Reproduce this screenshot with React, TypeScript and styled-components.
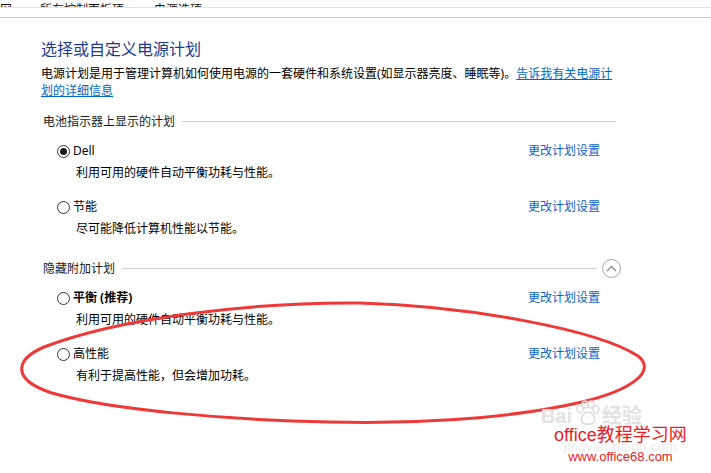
import React from 'react';
import styled, { createGlobalStyle } from 'styled-components';

const GlobalStyle = createGlobalStyle`
    html, body {
        margin: 0;
        padding: 0;
        background: #ffffff;
    }
    body {
        font-family: "Noto Sans", "Noto Sans CJK SC", sans-serif;
        font-size: 12px;
        color: #000;
    }
`;

const Page = styled.div`
    position: relative;
    width: 711px;
    height: 473px;
    overflow: hidden;
    background: #fff;
`;

/* bande du haut (fil d'Ariane coupé) */
const Crumbs = styled.div`
    height: 7px;
    overflow: hidden;
    border-bottom: 1px solid #e3e3e3;
    display: flex;
    align-items: flex-end;
`;

const Crumb = styled.span<{ $left: number }>`
    margin-left: ${(p) => p.$left}px;
    line-height: 17px;
    margin-bottom: -11px;
    white-space: nowrap;
    color: #111;
`;

const ToolStrip = styled.div`
    height: 9px;
    border-bottom: 1px solid #cbcbcb;
`;

const Main = styled.div`
    padding: 20px 0 0 41px;
    width: 575px;
`;

const Title = styled.h1`
    margin: 0;
    font-size: 16px;
    line-height: 22px;
    font-weight: normal;
    color: #1e3a8f;
`;

const Intro = styled.p`
    margin: 5px 0 0;
    line-height: 17px;
    white-space: nowrap;
`;

const Link = styled.a`
    color: #0066cc;
    text-decoration: underline;
    cursor: pointer;
`;

const SectionHead = styled.div<{ $top: number }>`
    display: flex;
    align-items: center;
    gap: 7px;
    margin: ${(p) => p.$top}px 0 0 2px;
    height: 18px;
    color: #1a1a1a;
`;

const Rule = styled.div`
    flex: 1;
    height: 1px;
    background: #cfcfcf;
`;

const Collapse = styled.button`
    width: 19px;
    height: 19px;
    margin: 0 -5px 0 -2px;
    padding: 0;
    border: 1px solid #a6a6a6;
    border-radius: 50%;
    background: #fff;
    display: flex;
    align-items: center;
    justify-content: center;
`;

const PlanList = styled.div`
    display: flex;
    flex-direction: column;
    gap: 17px;
    margin: 12px 0 0 16px;
    width: 543px;
`;

const Plan = styled.div``;

const PlanRow = styled.div`
    display: flex;
    align-items: center;
    justify-content: space-between;
    height: 18px;
`;

const Choice = styled.label`
    display: flex;
    align-items: center;
    gap: 3px;
`;

const Radio = styled.span<{ $checked?: boolean }>`
    box-sizing: border-box;
    width: 13px;
    height: 13px;
    border: 1px solid #333;
    border-radius: 50%;
    display: flex;
    align-items: center;
    justify-content: center;
    &::after {
        content: "";
        width: 7px;
        height: 7px;
        border-radius: 50%;
        background: ${(p) => (p.$checked ? '#1a1a1a' : 'transparent')};
    }
`;

const PlanName = styled.span<{ $bold?: boolean }>`
    font-weight: ${(p) => (p.$bold ? 700 : 400)};
    line-height: 18px;
`;

const ChangeLink = styled.a`
    color: #0b63c8;
    line-height: 18px;
    cursor: pointer;
`;

const PlanDesc = styled.div`
    margin: 4px 0 0 19px;
    line-height: 17px;
`;

/* annotations superposées */
const Overlay = styled.svg`
    position: absolute;
    left: 0;
    top: 0;
    pointer-events: none;
`;

const Watermark = styled.div`
    position: absolute;
    right: 11px;
    bottom: 9px;
    display: flex;
    flex-direction: column;
    align-items: center;
    font-family: "Liberation Sans", "Noto Sans CJK SC", sans-serif;
`;

const BaiduLine = styled.div`
    display: flex;
    align-items: flex-end;
    gap: 2px;
    color: #e2e2e2;
    font-size: 20px;
    font-weight: bold;
    line-height: 20px;
    margin-right: 58px;
`;

const SiteName = styled.div`
    color: #ec1c24;
    font-size: 18px;
    line-height: 18px;
`;

const Faint = styled.div`
    color: #ececec;
    font-size: 13px;
    line-height: 6px;
    letter-spacing: 0.5px;
`;

const SiteUrl = styled.div`
    color: #ec1c24;
    font-size: 13px;
    line-height: 14px;
`;

type PlanItem = { name: string; desc: string; checked?: boolean; bold?: boolean };

const battery: PlanItem[] = [
    { name: 'Dell', desc: '利用可用的硬件自动平衡功耗与性能。', checked: true },
    { name: '节能', desc: '尽可能降低计算机性能以节能。' },
];

const hidden: PlanItem[] = [
    { name: '平衡 (推荐)', desc: '利用可用的硬件自动平衡功耗与性能。', bold: true },
    { name: '高性能', desc: '有利于提高性能，但会增加功耗。' },
];

const Plans = ({ items }: { items: PlanItem[] }) => (
    <PlanList>
        {items.map((p) => (
            <Plan key={p.name}>
                <PlanRow>
                    <Choice>
                        <Radio $checked={p.checked} />
                        <PlanName $bold={p.bold}>{p.name}</PlanName>
                    </Choice>
                    <ChangeLink>更改计划设置</ChangeLink>
                </PlanRow>
                <PlanDesc>{p.desc}</PlanDesc>
            </Plan>
        ))}
    </PlanList>
);

const Paw = () => (
    <svg width="26" height="26" viewBox="0 0 26 26">
        <g fill="none" stroke="#dcdcdc" strokeWidth="1.5">
            <ellipse cx="6" cy="9" rx="3" ry="4" />
            <ellipse cx="11" cy="4.5" rx="3" ry="3.5" />
            <ellipse cx="17" cy="4.5" rx="3" ry="3.5" />
            <ellipse cx="22" cy="9.5" rx="3" ry="4" />
            <path d="M8 22 C6 16 11 12 14 12 C18 12 22 17 20 22 C18 25 10 25 8 22 Z" />
        </g>
    </svg>
);

const App = () => {
    return (
        <Page>
            <GlobalStyle />
            <Crumbs>
                <Crumb $left={0}>网</Crumb>
                <Crumb $left={28}>所有控制面板项</Crumb>
                <Crumb $left={30}>电源选项</Crumb>
            </Crumbs>
            <ToolStrip />
            <Main>
                <Title>选择或自定义电源计划</Title>
                <Intro>
                    电源计划是用于管理计算机如何使用电源的一套硬件和系统设置(如显示器亮度、睡眠等)。<Link>告诉我有关电源计</Link>
                    <br />
                    <Link>划的详细信息</Link>
                </Intro>
                <SectionHead $top={13}>
                    <span>电池指示器上显示的计划</span>
                    <Rule />
                </SectionHead>
                <Plans items={battery} />
                <SectionHead $top={22}>
                    <span>隐藏附加计划</span>
                    <Rule />
                    <Collapse aria-label="折叠">
                        <svg width="11" height="7" viewBox="0 0 11 7">
                            <path d="M1 6 L5.5 1.5 L10 6" fill="none" stroke="#8a8a8a" strokeWidth="1.3" />
                        </svg>
                    </Collapse>
                </SectionHead>
                <Plans items={hidden} />
            </Main>

            <Overlay width="711" height="473" viewBox="0 0 711 473">
                <path
                    d="M360 303 C470 306 598 330 638 356 C657 371 632 390 582 402 C505 420 405 424 330 422 C230 420 110 410 52 393 C12 380 14 360 44 347 C120 318 250 302 360 303 Z"
                    fill="none"
                    stroke="#ef3838"
                    strokeWidth="3"
                />
            </Overlay>

            <Watermark>
                <BaiduLine>
                    <span>Bai</span>
                    <Paw />
                    <span>经验</span>
                </BaiduLine>
                <SiteName>office教程学习网</SiteName>
                <Faint>jingyan.baidu.com</Faint>
                <SiteUrl>www.office68.com</SiteUrl>
            </Watermark>
        </Page>
    );
};

export default App;
